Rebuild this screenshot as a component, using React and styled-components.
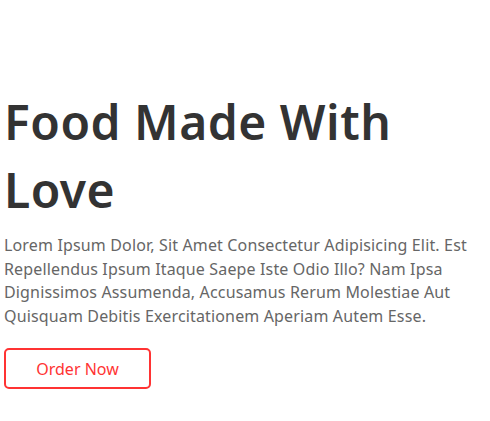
import React from 'react';
import styled, { createGlobalStyle } from 'styled-components';

const GlobalStyle = createGlobalStyle`
  * {
    margin: 0;
    padding: 0;
    box-sizing: border-box;
  }

  body {
    background: #fff;
    font-family: 'Noto Sans', 'Open Sans', sans-serif;
  }
`;

const Hero = styled.section`
  padding: 88px 4px 0;
  max-width: 486px;
`;

const Title = styled.h1`
  font-size: 48px;
  line-height: 68px;
  font-weight: 600;
  letter-spacing: 0.5px;
  color: #333;
`;

const Text = styled.p`
  margin-top: 10px;
  font-size: 16px;
  line-height: 23.5px;
  letter-spacing: 0.15px;
  color: #666;
`;

const Button = styled.a`
  display: inline-flex;
  align-items: center;
  justify-content: center;
  margin-top: 20px;
  width: 147px;
  height: 41px;
  border: 2px solid #f33;
  border-radius: 5px;
  color: #f33;
  font-size: 16px;
  text-decoration: none;
  cursor: pointer;
`;

const App = () => (
  <>
    <GlobalStyle />
    <Hero>
      <Title>Food Made With Love</Title>
      <Text>
        Lorem Ipsum Dolor, Sit Amet Consectetur Adipisicing Elit. Est
        Repellendus Ipsum Itaque Saepe Iste Odio Illo? Nam Ipsa Dignissimos
        Assumenda, Accusamus Rerum Molestiae Aut Quisquam Debitis
        Exercitationem Aperiam Autem Esse.
      </Text>
      <Button>Order Now</Button>
    </Hero>
  </>
);

export default App;
